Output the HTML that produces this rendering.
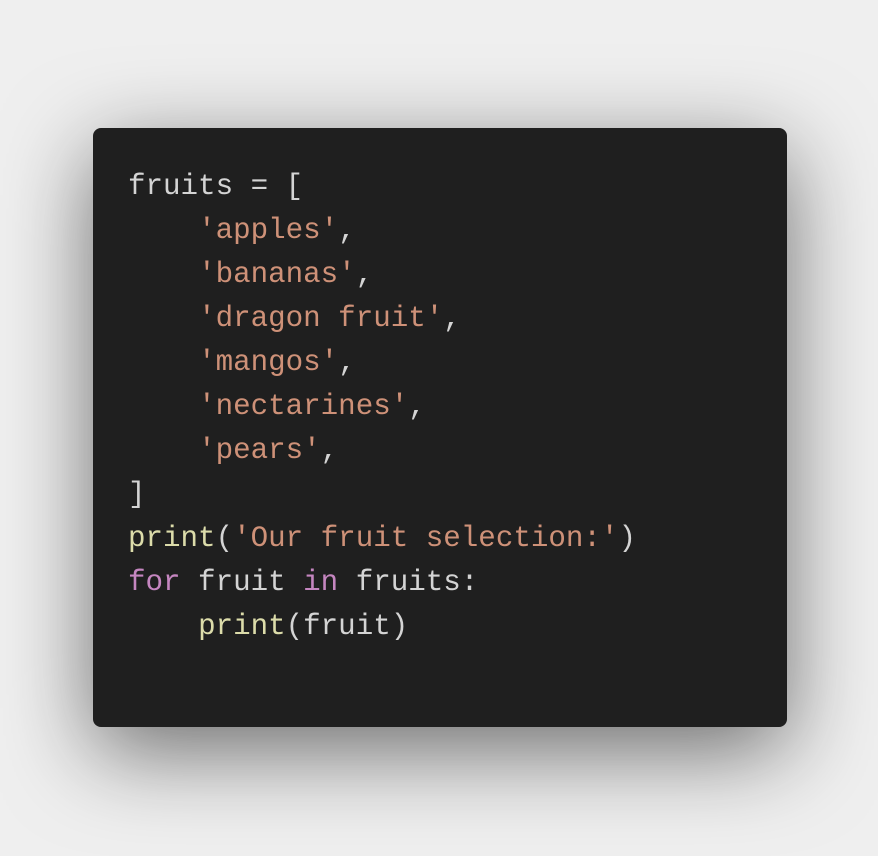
<!DOCTYPE html>
<html><head><style>
html,body{margin:0;padding:0;width:878px;height:856px;background:#efefef;overflow:hidden}
.card{position:absolute;left:93px;top:128px;width:694px;height:599px;background:#1f1f1f;border-radius:8px;box-shadow:0 24px 90px rgba(0,0,0,0.55)}
pre{position:absolute;left:35px;top:37px;margin:0;font-family:"Liberation Mono",monospace;font-size:29.2px;line-height:44px;color:#d4d4d4}
.s{color:#ce9178}.f{color:#dcdcaa}.k{color:#c586c0}
</style></head><body>
<div class="card"><pre>fruits = [
    <span class="s">'apples'</span>,
    <span class="s">'bananas'</span>,
    <span class="s">'dragon fruit'</span>,
    <span class="s">'mangos'</span>,
    <span class="s">'nectarines'</span>,
    <span class="s">'pears'</span>,
]
<span class="f">print</span>(<span class="s">'Our fruit selection:'</span>)
<span class="k">for</span> fruit <span class="k">in</span> fruits:
    <span class="f">print</span>(fruit)</pre></div>
</body></html>
